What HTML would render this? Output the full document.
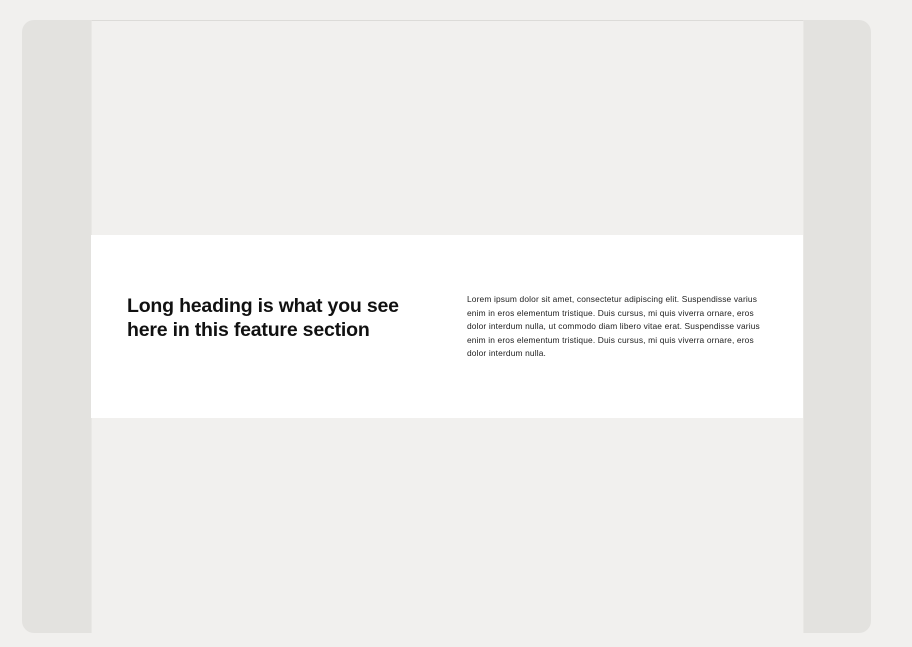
<!DOCTYPE html>
<html><head><style>
body{margin:0;width:912px;height:647px;background:#f1f0ee;font-family:"Liberation Sans",sans-serif;position:relative;overflow:hidden}
.card{position:absolute;left:22px;top:20px;width:849px;height:613px;background:#e3e2df;border-radius:12px;overflow:hidden}
.inner{position:absolute;left:69px;top:0;width:711px;height:612px;background:#f1f0ee;border-top:1px solid #dcdbd8;border-left:1px solid #e9e8e5;border-right:1px solid #e9e8e5;}
.band{position:absolute;left:91px;top:235px;width:712px;height:183px;background:#fff}
h2{position:absolute;left:36px;top:59px;margin:0;font-size:19.5px;line-height:24px;font-weight:bold;color:#111;width:310px;letter-spacing:-0.2px}
p{position:absolute;left:376px;top:58px;margin:0;font-size:8.4px;line-height:13.6px;color:#222;width:320px;letter-spacing:0.15px;white-space:nowrap}
</style></head><body>
<div class="card"><div class="inner"></div></div>
<div class="band">
<h2>Long heading is what you see here in this feature section</h2>
<p>Lorem ipsum dolor sit amet, consectetur adipiscing elit. Suspendisse varius<br>enim in eros elementum tristique. Duis cursus, mi quis viverra ornare, eros<br>dolor interdum nulla, ut commodo diam libero vitae erat. Suspendisse varius<br>enim in eros elementum tristique. Duis cursus, mi quis viverra ornare, eros<br>dolor interdum nulla.</p>
</div>
</body></html>
